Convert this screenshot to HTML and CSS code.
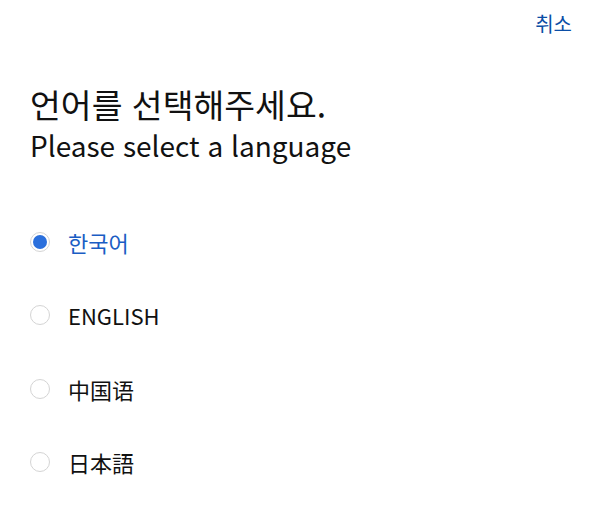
FILE: index.html
```html
<!DOCTYPE html>
<html lang="ko">
<head>
<meta charset="utf-8">
<link rel="stylesheet" href="styles.css">
</head>
<body>
<div class="page">
  <div class="topbar"><span class="cancel">취소</span></div>
  <div class="heading">
    <div class="title-ko">언어를 선택해주세요.</div>
    <div class="title-en">Please select a language</div>
  </div>
  <ul class="langs">
    <li class="lang selected"><span class="radio"></span><span class="label">한국어</span></li>
    <li class="lang"><span class="radio"></span><span class="label">ENGLISH</span></li>
    <li class="lang"><span class="radio"></span><span class="label">中国语</span></li>
    <li class="lang"><span class="radio"></span><span class="label">日本語</span></li>
  </ul>
</div>
</body>
</html>
```
FILE: styles.css
```css
html, body {
  margin: 0;
  padding: 0;
  background: #ffffff;
}
body {
  font-family: "Noto Sans CJK KR", "Noto Sans", sans-serif;
  color: #111111;
}
.page {
  width: 600px;
  height: 525px;
  overflow: hidden;
}
.topbar {
  display: flex;
  justify-content: flex-end;
  padding: 10px 28px 0 0;
  height: 30px;
}
.cancel {
  font-size: 20px;
  line-height: 28px;
  color: #0b4ea6;
}
.heading {
  padding: 44px 0 0 30px;
}
.title-ko {
  font-size: 33.5px;
  line-height: 40px;
}
.title-en {
  font-size: 28px;
  line-height: 42px;
}
.langs {
  list-style: none;
  margin: 0;
  padding: 39.5px 0 0 30px;
}
.lang {
  display: flex;
  align-items: center;
  gap: 18px;
  height: 73.3px;
}
.radio {
  box-sizing: border-box;
  width: 20px;
  height: 20px;
  border-radius: 50%;
  border: 1px solid #d4d4d4;
  display: flex;
  align-items: center;
  justify-content: center;
}
.selected .radio::after {
  content: "";
  width: 14px;
  height: 14px;
  border-radius: 50%;
  background: #2a6fdc;
}
.label {
  font-size: 22px;
  line-height: 30px;
}
.selected .label {
  color: #1a5dc4;
}
```
